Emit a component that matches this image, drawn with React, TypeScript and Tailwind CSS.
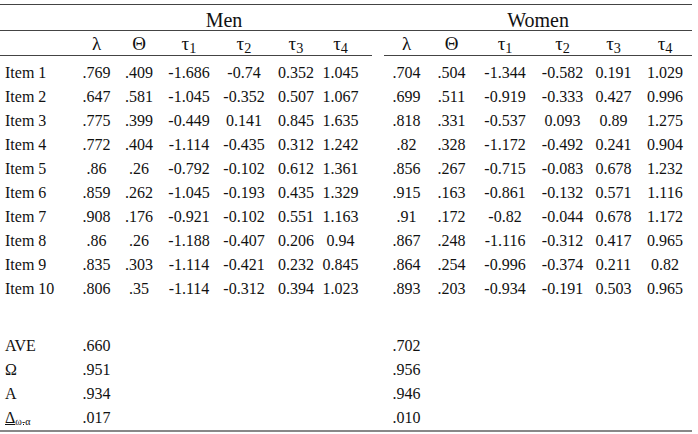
const men = [
  ["Item 1", ".769", ".409", "-1.686", "-0.74", "0.352", "1.045"],
  ["Item 2", ".647", ".581", "-1.045", "-0.352", "0.507", "1.067"],
  ["Item 3", ".775", ".399", "-0.449", "0.141", "0.845", "1.635"],
  ["Item 4", ".772", ".404", "-1.114", "-0.435", "0.312", "1.242"],
  ["Item 5", ".86", ".26", "-0.792", "-0.102", "0.612", "1.361"],
  ["Item 6", ".859", ".262", "-1.045", "-0.193", "0.435", "1.329"],
  ["Item 7", ".908", ".176", "-0.921", "-0.102", "0.551", "1.163"],
  ["Item 8", ".86", ".26", "-1.188", "-0.407", "0.206", "0.94"],
  ["Item 9", ".835", ".303", "-1.114", "-0.421", "0.232", "0.845"],
  ["Item 10", ".806", ".35", "-1.114", "-0.312", "0.394", "1.023"],
];

const women = [
  [".704", ".504", "-1.344", "-0.582", "0.191", "1.029"],
  [".699", ".511", "-0.919", "-0.333", "0.427", "0.996"],
  [".818", ".331", "-0.537", "0.093", "0.89", "1.275"],
  [".82", ".328", "-1.172", "-0.492", "0.241", "0.904"],
  [".856", ".267", "-0.715", "-0.083", "0.678", "1.232"],
  [".915", ".163", "-0.861", "-0.132", "0.571", "1.116"],
  [".91", ".172", "-0.82", "-0.044", "0.678", "1.172"],
  [".867", ".248", "-1.116", "-0.312", "0.417", "0.965"],
  [".864", ".254", "-0.996", "-0.374", "0.211", "0.82"],
  [".893", ".203", "-0.934", "-0.191", "0.503", "0.965"],
];

const summary = [
  { label: <>AVE</>, men: ".660", women: ".702" },
  { label: <>Ω</>, men: ".951", women: ".956" },
  { label: <>A</>, men: ".934", women: ".946" },
  {
    label: (
      <span className="underline">
        Δ<sub className="text-[10px]">ω-α</sub>
      </span>
    ),
    men: ".017",
    women: ".010",
  },
];

const widths = [76, 41, 44, 56, 54, 50, 51, 12, 45, 45, 62, 53, 49, 54];

function Params() {
  return (
    <>
      <th className="font-normal border-b border-[#444]">λ</th>
      <th className="font-normal border-b border-[#444]">Θ</th>
      <th className="font-normal border-b border-[#444]">
        τ<sub>1</sub>
      </th>
      <th className="font-normal border-b border-[#444]">
        τ<sub>2</sub>
      </th>
      <th className="font-normal border-b border-[#444]">
        τ<sub>3</sub>
      </th>
    </>
  );
}

export default function App() {
  return (
    <div className="w-[698px] h-[434px] bg-white pt-[4px] text-[#111] font-['Liberation_Serif','Times_New_Roman',serif] text-[16px]">
      <table className="table-fixed border-collapse w-[692px]">
        <colgroup>
          {widths.map((w, i) => (
            <col key={i} style={{ width: w }} />
          ))}
        </colgroup>
        <thead>
          <tr className="h-[26px] border-t border-b border-[#444] text-[20px] leading-none">
            <th />
            <th colSpan={6} className="font-normal pt-[5px]">
              Men
            </th>
            <th />
            <th colSpan={6} className="font-normal pt-[5px]">
              Women
            </th>
          </tr>
          <tr className="h-[25px] text-[19px] leading-none">
            <th className="border-b border-[#444]" />
            <Params />
            <th className="font-normal border-b border-[#444] pr-[12px]">
              τ<sub>4</sub>
            </th>
            <th />
            <Params />
            <th className="font-normal border-b border-[#444]">
              τ<sub>4</sub>
            </th>
          </tr>
        </thead>
        <tbody>
          <tr className="h-[5px]">
            <td colSpan={14} />
          </tr>
          {men.map((row, i) => (
            <tr key={row[0]} className="h-[24px]">
              <td className="pl-[5px] whitespace-nowrap">{row[0]}</td>
              {row.slice(1, 6).map((v, j) => (
                <td key={j} className="text-center">
                  {v}
                </td>
              ))}
              <td className="text-center pr-[12px]">{row[6]}</td>
              <td />
              {women[i].map((v, j) => (
                <td key={j} className="text-center">
                  {v}
                </td>
              ))}
            </tr>
          ))}
          <tr className="h-[33px]">
            <td colSpan={14} />
          </tr>
          {summary.map((s, i) => (
            <tr
              key={i}
              className={
                i === summary.length - 1
                  ? "h-[24px] border-b-2 border-[#888]"
                  : "h-[24px]"
              }
            >
              <td className="pl-[5px] whitespace-nowrap">{s.label}</td>
              <td className="text-center">{s.men}</td>
              <td colSpan={6} />
              <td className="text-center">{s.women}</td>
              <td colSpan={5} />
            </tr>
          ))}
        </tbody>
      </table>
    </div>
  );
}
